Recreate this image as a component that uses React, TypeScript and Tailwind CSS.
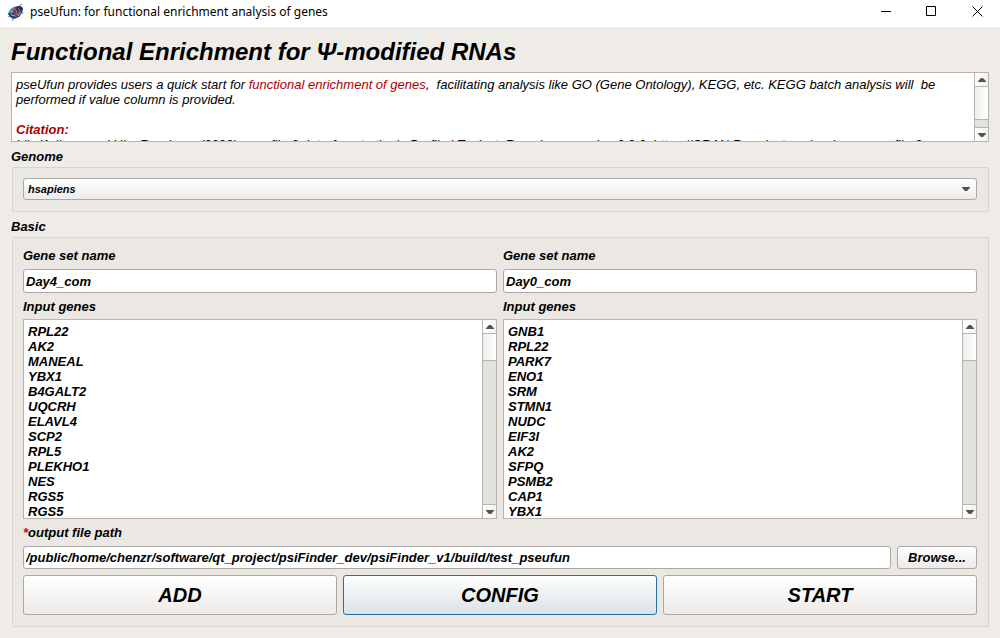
import { useState } from "react";
import type { ReactNode } from "react";

const dayFourGenes = ["RPL22", "AK2", "MANEAL", "YBX1", "B4GALT2", "UQCRH", "ELAVL4", "SCP2", "RPL5", "PLEKHO1", "NES", "RGS5", "RGS5"];
const dayZeroGenes = ["GNB1", "RPL22", "PARK7", "ENO1", "SRM", "STMN1", "NUDC", "EIF3I", "AK2", "SFPQ", "PSMB2", "CAP1", "YBX1"];

function Arrow({ up = false }: { up?: boolean }) {
  return (
    <svg width="8" height="4" viewBox="0 0 8 4" fill="#555250" aria-hidden="true">
      <path d={up ? "M0 4V3.200L3 0H5L8 3.200V4Z" : "M0 0H8V.8L5 4H3L0 .8Z"} />
    </svg>
  );
}

function ScrollBar({ thumb }: { thumb: string }) {
  return (
    <div className="flex w-[14px] shrink-0 flex-col border-l border-[#b6b3b0] bg-[#e3e2df]">
      <button type="button" aria-label="Scroll up" className="flex h-[14px] shrink-0 items-center justify-center border-b border-[#b6b3b0] bg-gradient-to-r from-white to-[#f3f2f0]">
        <Arrow up />
      </button>
      <div className={`${thumb} shrink-0 border-b border-[#b6b3b0] bg-gradient-to-r from-[#efeeeb] to-white`} />
      <div className="flex-1" />
      <button type="button" aria-label="Scroll down" className="flex h-[14px] shrink-0 items-center justify-center border-t border-[#b6b3b0] bg-gradient-to-r from-white to-[#f3f2f0]">
        <Arrow />
      </button>
    </div>
  );
}

function GeneSet({ id, name, genes }: { id: string; name: string; genes: string[] }) {
  return (
    <div className="flex min-w-0 flex-col">
      <label htmlFor={`${id}-name`} className="h-[27px] pt-[6px]">Gene set name</label>
      <input
        id={`${id}-name`}
        defaultValue={name}
        className="h-[24px] w-full rounded-[3px] border border-[#aaa7a4] bg-white px-[2px] outline-none"
      />
      <label htmlFor={`${id}-genes`} className="h-[26px] pt-[6px]">Input genes</label>
      <div className="flex h-[200px] border border-[#b6b3b0] bg-white">
        <textarea
          id={`${id}-genes`}
          defaultValue={genes.join("\n")}
          className="min-w-0 flex-1 resize-none overflow-hidden px-[4px] pt-[4px] leading-[15px] outline-none"
        />
        <ScrollBar thumb="h-[27px]" />
      </div>
    </div>
  );
}

function Group({ title, children }: { title: string; children: ReactNode }) {
  return (
    <section>
      <h2 className="h-[25px] pt-[7px]">{title}</h2>
      <div className="ml-px rounded-[2px] border border-[#d6d3d0] bg-[#ebe8e4] pt-[10px] pr-[11px] pb-[11px] pl-[10px]">{children}</div>
    </section>
  );
}

function ActionButton({ label, active, onClick }: { label: string; active: boolean; onClick: () => void }) {
  const tone = active ? "border-[#27709f] to-[#dae2e7]" : "border-[#aaa7a4] to-[#edebe9]";
  return (
    <button type="button" onClick={onClick} className={`${tone} h-[40px] rounded-[3px] border bg-gradient-to-b from-white text-[20px] leading-[24px]`}>
      {label}
    </button>
  );
}

function AppLogo() {
  return (
    <svg width="18" height="18" viewBox="0 0 18 18" aria-hidden="true">
      <path d="M1 11 3 7 7 4 12 3 16 5 15 10 12 14 7 16 3 14Z" fill="#243665" />
      <path d="M2 9 5 5 9 4 7 8 4 12Z" fill="#477bb2" />
      <path d="M9 4 14 3 16 6 13 10 10 9Z" fill="#28325c" />
      <path d="m7 7 3 1 2 4-3 3-3-3Z" fill="#744553" />
      <path d="m7 5 3 3-1 4m2-7 2 3-2 4" fill="none" stroke="#b66c67" strokeWidth="1" />
      <path d="m12 3 3-2M3 13l-2 1m4 1 1 3m9-7 1-2" stroke="#6f91c2" strokeWidth="1" />
      <path d="m3 8 3 1m-2 3 4 1m3 0 3-4" stroke="#8cbbe0" strokeWidth="1" />
    </svg>
  );
}

const actions = ["ADD", "CONFIG", "START"];

export default function App() {
  const [active, setActive] = useState("CONFIG");
  return (
    <div className="min-h-screen bg-[#efebe7] font-['Liberation_Sans',Arial,sans-serif] text-[13px] leading-[15px] text-black">
      <header className="flex h-[27px] items-start justify-between bg-white">
        <div className="flex items-center gap-[5px] pl-[7px] pt-[3px]">
          <AppLogo />
          <span className="font-['Noto_Sans',sans-serif] text-[12px] leading-[18px]">pseUfun: for functional enrichment analysis of genes</span>
        </div>
        <div className="flex">
          <button type="button" aria-label="Minimize" className="flex h-[23px] w-[46px] items-center justify-center">
            <svg width="11" height="11" viewBox="0 0 11 11"><path d="M0 5.5H10" stroke="black" /></svg>
          </button>
          <button type="button" aria-label="Maximize" className="flex h-[23px] w-[45px] items-center justify-center">
            <svg width="11" height="11" viewBox="0 0 11 11"><path d="M.5.5H9.500V9.500H.5Z" fill="none" stroke="black" /></svg>
          </button>
          <button type="button" aria-label="Close" className="flex h-[23px] w-[46px] items-center justify-center">
            <svg width="11" height="11" viewBox="0 0 11 11"><path d="m.5.5 10 10m0-10-10 10" stroke="black" /></svg>
          </button>
        </div>
      </header>

      <main className="px-[11px] pb-[11px] font-bold italic">
        <h1 className="h-[45px] pt-[10px] text-[24px] leading-[29px]">Functional Enrichment for Ψ-modified RNAs</h1>

        <div className="flex h-[70px] border border-[#b6b3b0] bg-white">
          <div className="min-w-0 flex-1 overflow-hidden px-[4px] pt-[4px] font-normal">
            <p className="whitespace-pre-wrap pr-[20px]">
              pseUfun provides users a quick start for <span className="text-[#aa0000]">functional enrichment of genes</span>
              {",  facilitating analysis like GO (Gene Ontology), KEGG, etc. KEGG batch analysis will  be performed if value column is provided."}
            </p>
            <p className="mt-[15px] font-bold text-[#aa0000]">Citation:</p>
            <p className="whitespace-nowrap">
              Liis Kolberg and Uku Raudvere (2020). gprofiler2: Interface to the 'g:Profiler' Toolset. R package version 0.2.0. https://CRAN.R-project.org/package=gprofiler2.
            </p>
          </div>
          <ScrollBar thumb="h-[33px]" />
        </div>

        <Group title="Genome">
          <div className="relative">
            <select
              aria-label="Genome"
              className="block h-[22px] w-full appearance-none rounded-[3px] border border-[#aaa7a4] bg-gradient-to-b from-white to-[#edebe9] px-[4px] text-[11px] leading-[13px] outline-none"
            >
              <option>hsapiens</option>
            </select>
            <span className="pointer-events-none absolute inset-y-0 right-[7px] flex items-center"><Arrow /></span>
          </div>
        </Group>

        <Group title="Basic">
          <div className="-mt-[6px] grid grid-cols-2 gap-[6px]">
            <GeneSet id="day-four" name="Day4_com" genes={dayFourGenes} />
            <GeneSet id="day-zero" name="Day0_com" genes={dayZeroGenes} />
          </div>
          <label htmlFor="output" className="block h-[27px] pt-[6px]"><span className="text-[#cc0000]">*</span>output file path</label>
          <div className="flex gap-[6px]">
            <input
              id="output"
              defaultValue="/public/home/chenzr/software/qt_project/psiFinder_dev/psiFinder_v1/build/test_pseufun"
              className="h-[23px] min-w-0 flex-1 rounded-[3px] border border-[#aaa7a4] bg-white px-[2px] outline-none"
            />
            <button type="button" className="h-[23px] w-[80px] rounded-[3px] border border-[#aaa7a4] bg-gradient-to-b from-white to-[#edebe9]">Browse...</button>
          </div>
          <div className="mt-[6px] grid grid-cols-3 gap-[6px]">
            {actions.map((label) => (
              <ActionButton key={label} label={label} active={active === label} onClick={() => setActive(label)} />
            ))}
          </div>
        </Group>
      </main>
    </div>
  );
}
